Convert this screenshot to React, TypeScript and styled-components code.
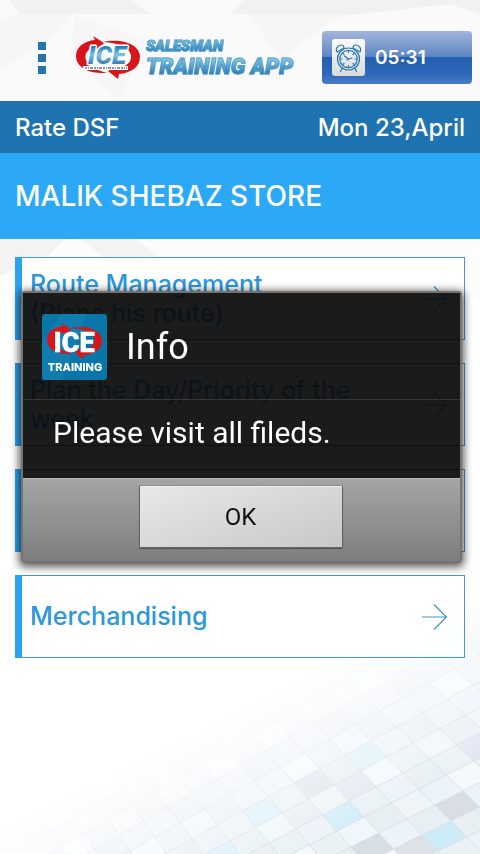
import React from "react";
import styled, { createGlobalStyle } from "styled-components";

const uiFont = `Inter, "Noto Sans", sans-serif`;
const dialogFont = `Roboto, "Noto Sans", sans-serif`;

const GlobalStyle = createGlobalStyle`
  *, *::before, *::after { box-sizing: border-box; }
  body { margin: 0; background: #fff; font-family: ${uiFont}; }
  button { font: inherit; cursor: pointer; }
  h1, h2, p { margin: 0; font-weight: inherit; font-size: inherit; }
`;

const Page = styled.div`
  position: relative;
  min-height: 100vh;
  overflow: hidden;
`;

const Backdrop = styled.svg`
  position: absolute;
  inset: 0;
  width: 100%;
  height: 100%;
  z-index: -1;
`;

const Header = styled.header`
  display: flex;
  align-items: center;
  height: 101px;
  padding: 14px 8px 0 30px;
`;

const MenuButton = styled.button`
  display: grid;
  gap: 4px;
  padding: 8px;
  border: 0;
  background: none;
`;

const MenuDot = styled.span`
  width: 8px;
  height: 8px;
  background: #2574ac;
`;

const Brand = styled.div`
  display: flex;
  align-items: center;
  gap: 5px;
  margin-left: 22px;
`;

const BrandText = styled.div`
  display: grid;
  justify-items: start;
  font-family: ${dialogFont};
  font-weight: 900;
  font-style: italic;
  white-space: nowrap;
`;

const BrandLine = styled.span<{ $large?: boolean }>`
  padding-right: 4px;
  font-size: ${(p) => (p.$large ? 22 : 15)}px;
  line-height: ${(p) => (p.$large ? 24 : 18)}px;
  color: transparent;
  background: linear-gradient(#86c5e2 20%, #2b7ab4 80%);
  background-clip: text;
  -webkit-background-clip: text;
  -webkit-text-stroke: 1px rgba(72, 152, 201, 0.75);
`;

const Clock = styled.div`
  display: flex;
  flex: none;
  align-items: center;
  gap: 10px;
  width: 150px;
  height: 53px;
  margin-left: auto;
  padding: 0 10px;
  border-radius: 4px;
  background: linear-gradient(#a3b5db 0%, #5f86c4 48%, #2560ae 50%, #2d68ba 80%, #4a7cc6 100%);
  color: #fff;
  font-size: 19px;
  font-weight: 600;
`;

const ClockTile = styled.span`
  display: grid;
  place-items: center;
  width: 33px;
  height: 37px;
  border-radius: 3px;
  background: linear-gradient(#fbfbfb, #d9dadc);
`;

const TitleBar = styled.div`
  display: flex;
  align-items: center;
  justify-content: space-between;
  height: 52px;
  padding: 0 15px;
  background: #1f73b0;
  color: #fff;
  font-size: 24px;
  font-weight: 500;
`;

const StoreBar = styled.h1`
  && { font-size: 28px; }
  display: flex;
  align-items: center;
  height: 86px;
  padding: 0 15px;
  background: #2ba8f6;
  color: #fff;
  font-weight: 500;
`;

const List = styled.main`
  display: grid;
  gap: 23px;
  padding: 18px 15px;
`;

const Card = styled.button`
  display: flex;
  align-items: center;
  justify-content: space-between;
  width: 100%;
  min-height: 83px;
  padding: 0 16px 0 8px;
  border: 1px solid #4798cf;
  border-left: 7px solid #2ba3ee;
  background: rgba(255, 255, 255, 0.7);
  color: #2b97dc;
  font-size: 25px;
  font-weight: 500;
  line-height: 29px;
  text-align: left;
  white-space: pre-line;
`;

const Overlay = styled.div`
  position: fixed;
  inset: 0;
  display: flex;
  align-items: center;
  justify-content: center;
  padding: 0 18px 0 21px;
`;

const Dialog = styled.section`
  width: 100%;
  max-width: 520px;
  border: 2px solid #77726d;
  border-radius: 3px;
  box-shadow: 0 2px 9px 2px rgba(0, 0, 0, 0.65);
  font-family: ${dialogFont};
  color: #fff;
`;

const DialogHead = styled.header`
  display: flex;
  align-items: center;
  gap: 19px;
  height: 107px;
  padding: 2px 19px 0;
  border-bottom: 1px solid #343637;
  background: rgba(8, 8, 8, 0.92);
  font-size: 36px;
`;

const DialogBody = styled.p`
  && { font-size: 30px; }
  height: 78px;
  padding: 14px 30px;
  background: rgba(8, 8, 8, 0.92);
  line-height: 38px;
`;

const DialogFoot = styled.footer`
  display: flex;
  justify-content: center;
  height: 83px;
  padding: 6px 2px 0 0;
  border-top: 1px solid #b9b9b9;
  background: linear-gradient(#a5a5a5, #7d7d7d);
`;

const OkButton = styled.button`
  width: 204px;
  height: 63px;
  border: 1px solid #656565;
  border-top-color: #8d8d8d;
  border-radius: 2px;
  background: linear-gradient(160deg, #e8e8e8, #c8c8c8);
  box-shadow: inset 0 1px 0 #f1f1f1, 0 1px 1px #555;
  color: #111;
  font-size: 24px;
`;

type Quad = { points: string; fill: string };

const tinted: [number, number, string][] = [
  [458, 800, "#d8dee3"], [452, 838, "#cdebf8"], [352, 818, "#d4eef9"],
  [273, 816, "#def1fb"], [281, 838, "#dde3ec"], [328, 785, "#e0e6ee"],
  [362, 781, "#e3eaf1"], [378, 757, "#dff1fa"], [466, 712, "#e0e7eb"],
  [467, 743, "#e1e7f2"], [345, 850, "#dae0e5"], [385, 850, "#d8dfe4"],
  [425, 850, "#dce2e7"], [215, 851, "#def1fb"],
];

function meshQuads(): Quad[] {
  const at = (i: number, j: number) => [480 + 25 * i + j * (19 + 0.6 * i), 655 - 14 * i + 16 * j];
  const base = ["#f0f6fa", "#eaf2f6", "#f3f9fc", "#ecf3f9", "#eef4f7", "#e8eff3"];
  const quads: Quad[] = [];
  for (let i = -26; i < 12; i++) {
    for (let j = -18; j < 22; j++) {
      const corners = [at(i, j), at(i + 1, j), at(i + 1, j + 1), at(i, j + 1)];
      const cx = corners.reduce((s, c) => s + c[0], 0) / 4;
      const cy = corners.reduce((s, c) => s + c[1], 0) / 4;
      if (cx < -20 || cx > 510 || cy < 560 || cy > 880) continue;
      const hit = tinted.find(([x, y]) => Math.abs(x - cx) / 22 + Math.abs(y - cy) / 15 < 0.75);
      const pick = Math.abs(i * 7 + j * 11 + i * j * 3) % base.length;
      quads.push({ points: corners.map((c) => c.join(",")).join(" "), fill: hit ? hit[2] : base[pick] });
    }
  }
  return quads;
}

const quads = meshQuads();

const PageBackdrop = () => (
  <Backdrop viewBox="0 0 480 854" preserveAspectRatio="xMidYMax slice" aria-hidden="true">
    <defs>
      <linearGradient id="fade" gradientUnits="userSpaceOnUse" x1="240" y1="705" x2="340" y2="905">
        <stop offset="0" stopColor="#000" />
        <stop offset="0.35" stopColor="#888" />
        <stop offset="0.7" stopColor="#fff" />
      </linearGradient>
      <mask id="meshMask" maskUnits="userSpaceOnUse" x="0" y="0" width="480" height="854">
        <rect width="480" height="854" fill="url(#fade)" />
      </mask>
    </defs>
    <rect width="480" height="300" fill="#fafafa" />
    <path d="M8 0H130L150 14H20Z M105 14H230L245 0H480V14L450 4L350 15L300 14Z" fill="#f1f1f1" />
    <path d="M20 14L70 14L55 36L0 70V20Z M75 15L145 40L120 100L70 55Z M250 14L345 14L320 30L280 60Z" fill="#f6f6f6" />
    <path d="M0 239H480V300H0Z" fill="#fdfdfd" />
    <path d="M0 239H65L45 258L0 275Z M80 239H135L160 258L110 262Z" fill="#f3f3f4" />
    <rect y="300" width="480" height="300" fill="#fff" />
    <g mask="url(#meshMask)" stroke="#d8e0e4" strokeWidth="0.8">
      {quads.map((q) => (
        <polygon key={q.points} points={q.points} fill={q.fill} />
      ))}
    </g>
  </Backdrop>
);

const Swirl = () => (
  <>
    <path d="M17 0L28 7L21 14L20 11C11 13 8 18 10 24C12 30 20 34 31 37C14 38 0 32 0 20C0 11 8 5 19 4Z" fill="#d9151c" />
    <path d="M27 6C45 2 64 8 64 21C64 31 55 37 43 38L42 43L32 35L42 29L42 32C52 30 56 25 55 19C53 11 42 7 27 6Z" fill="#d9151c" />
  </>
);

const IceLogo = () => (
  <svg width="65" height="43" viewBox="0 0 65 43" role="img" aria-label="ICE">
    <defs>
      <linearGradient id="ice" x1="0" y1="0" x2="0" y2="1">
        <stop offset="0.2" stopColor="#1a78b8" />
        <stop offset="0.5" stopColor="#7cc4e6" />
        <stop offset="0.9" stopColor="#1a68a8" />
      </linearGradient>
    </defs>
    <ellipse cx="32" cy="21" rx="24" ry="14" fill="#fff" />
    <Swirl />
    <text x="31" y="28" textAnchor="middle" fontFamily="Roboto, sans-serif" fontWeight="900" fontStyle="italic" fontSize="26" fill="url(#ice)" stroke="#fff" strokeWidth="3" strokeLinejoin="round" paintOrder="stroke">ICE</text>
    <path d="M7 32H52" stroke="#fff" strokeWidth="4" />
    <path d="M9 32H51" stroke="#6d7377" strokeWidth="1.5" strokeDasharray="2 1 1 1 3 1" />
  </svg>
);

const AppIcon = () => (
  <svg width="65" height="66" viewBox="0 0 65 66" role="img" aria-label="ICE TRAINING">
    <rect width="65" height="66" rx="3" fill="#0876a8" />
    <path d="M0 30L20 0H45L20 66H0Z" fill="#1583b3" opacity="0.5" />
    <g transform="translate(5 9) scale(0.86 0.84)"><Swirl /></g>
    <text x="32" y="38" textAnchor="middle" fontFamily="Roboto, sans-serif" fontWeight="900" fontSize="27" fill="#fff" stroke="#fff" strokeWidth="0.5">ICE</text>
    <text x="33" y="57" textAnchor="middle" fontFamily="Inter, sans-serif" fontWeight="800" fontSize="11" fill="#fff">TRAINING</text>
  </svg>
);

const AlarmIcon = () => (
  <svg width="27" height="30" viewBox="0 0 27 30" fill="none" stroke="#2877ad" strokeWidth="1.2" strokeLinecap="round" aria-hidden="true">
    <circle cx="13.5" cy="16" r="11" />
    <circle cx="13.5" cy="16" r="8.7" />
    <path d="M2 9C0 6 3 2 6 2C8 2 9 3 9 5Z M25 9C27 6 24 2 21 2C19 2 18 3 18 5Z" />
    <path d="M9.5 13L13.5 16L17 15M13.5 16L12 17M7 25.5L5.5 28.5M20 25.5L21.5 28.5M13.5 8V9.5M13.5 22.5V24M5.5 16H7M20 16H21.5M8 10.5L9 11.5M19 10.5L18 11.5M8 21.5L9 20.5M19 21.5L18 20.5" />
  </svg>
);

const ArrowIcon = () => (
  <svg width="27" height="28" viewBox="0 0 27 28" fill="none" stroke="#4493c9" strokeWidth="1.2" aria-hidden="true">
    <path d="M1 14H25.5M13 1.5L25.5 14L13 26.5" />
  </svg>
);

const tasks = ["Route Management\n(Plans his route)", "Plan the Day/Priority of the\nweek", "", "Merchandising"];

export default function App() {
  return (
    <>
      <GlobalStyle />
      <Page>
        <PageBackdrop />
        <Header>
          <MenuButton aria-label="Menu">
            <MenuDot />
            <MenuDot />
            <MenuDot />
          </MenuButton>
          <Brand>
            <IceLogo />
            <BrandText>
              <BrandLine>SALESMAN</BrandLine>
              <BrandLine $large>TRAINING APP</BrandLine>
            </BrandText>
          </Brand>
          <Clock>
            <ClockTile>
              <AlarmIcon />
            </ClockTile>
            <time>05:31</time>
          </Clock>
        </Header>
        <TitleBar>
          <span>Rate DSF</span>
          <time>Mon 23,April</time>
        </TitleBar>
        <StoreBar>MALIK SHEBAZ STORE</StoreBar>
        <List>
          {tasks.map((task, index) => (
            <Card key={index}>
              <span>{task}</span>
              <ArrowIcon />
            </Card>
          ))}
        </List>
      </Page>
      <Overlay>
        <Dialog role="dialog" aria-modal="true" aria-labelledby="dialog-title">
          <DialogHead>
            <AppIcon />
            <h2 id="dialog-title">Info</h2>
          </DialogHead>
          <DialogBody>Please visit all fileds.</DialogBody>
          <DialogFoot>
            <OkButton>OK</OkButton>
          </DialogFoot>
        </Dialog>
      </Overlay>
    </>
  );
}
